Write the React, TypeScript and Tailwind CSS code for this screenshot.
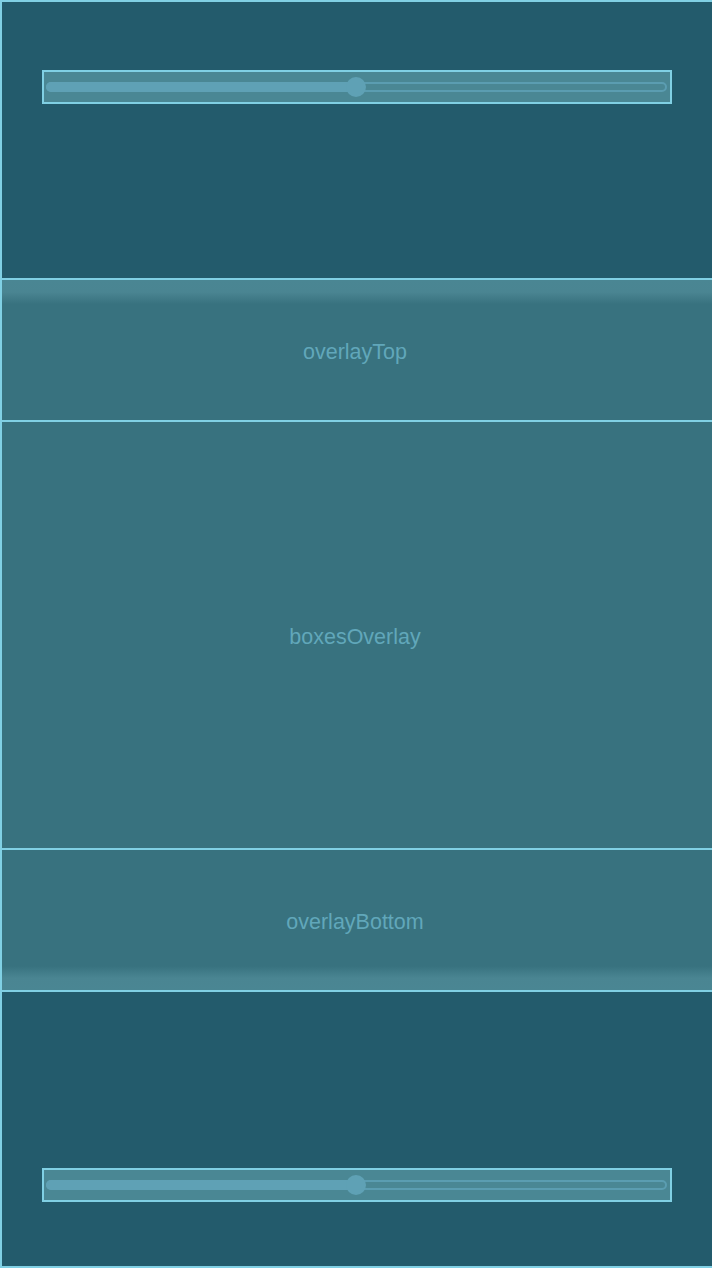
import React from "react";

function Slider() {
  return (
    <div className="ml-10 w-[630px] h-[34px] border-2 border-[#80d0e4] bg-[#4a8794] flex items-center px-[2px]">
      <div className="relative w-[621px] h-[10px] rounded-full border-2 border-[#5b9db1]">
        <div className="absolute -left-[2px] -top-[2px] h-[10px] w-[310px] rounded-full bg-[#5fa1b5]" />
        <div className="absolute left-[298px] -top-[7px] w-[20px] h-[20px] rounded-full bg-[#5fa1b5]" />
      </div>
    </div>
  );
}

export default function App() {
  return (
    <div className="w-[712px] h-[1268px] overflow-hidden bg-[#235b6c]" style={{ fontFamily: '"Liberation Sans", Arial, sans-serif' }}>
      <div className="w-[712px] h-[1268px] border-l-2 border-t-2 border-b-2 border-[#80d0e4] flex flex-col">
        <div className="h-[276px] pt-[68px] bg-[#235b6c]">
          <Slider />
        </div>
        <div className="h-[142px] border-t-2 border-[#80d0e4] bg-[#38727f] relative flex items-center justify-center pr-[4px]">
          <div className="absolute left-0 right-0 top-0 h-[24px] bg-linear-to-b from-[#4a8693] via-[#4a8592] to-[#38727f]" />
          <span className="relative text-[21.5px] text-[#61a7ba] pt-[4px]">overlayTop</span>
        </div>
        <div className="h-[428px] border-t-2 border-[#80d0e4] bg-[#38727f] flex items-center justify-center pr-[4px]">
          <span className="text-[21.5px] text-[#61a7ba] pt-[4px]">boxesOverlay</span>
        </div>
        <div className="h-[142px] border-t-2 border-[#80d0e4] bg-[#38727f] relative flex items-center justify-center pr-[4px]">
          <div className="absolute left-0 right-0 bottom-0 h-[24px] bg-linear-to-t from-[#4a8693] via-[#4a8592] to-[#38727f]" />
          <span className="relative text-[21.5px] text-[#61a7ba] pt-[4px]">overlayBottom</span>
        </div>
        <div className="h-[276px] border-t-2 border-[#80d0e4] pt-[176px] bg-[#235b6c]">
          <Slider />
        </div>
      </div>
    </div>
  );
}
